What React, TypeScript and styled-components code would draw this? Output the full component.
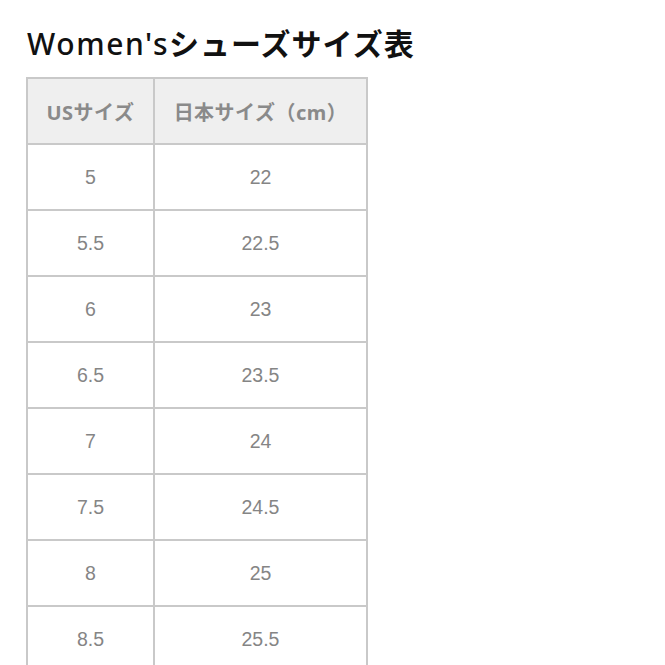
import React from 'react';
import styled, { createGlobalStyle } from 'styled-components';

const GlobalStyle = createGlobalStyle`
  body {
    margin: 0;
    background: #ffffff;
    font-family: "Noto Sans", "Noto Sans CJK JP", sans-serif;
  }
`;

const Page = styled.div`
  padding: 24px 0 0 26px;
`;

const Title = styled.h2`
  margin: 0 0 13px 1px;
  font-size: 30px;
  line-height: 40px;
  font-weight: 700;
  color: #111111;
  letter-spacing: 1px;
`;

const Latin = styled.span`
  font-weight: 500;
  letter-spacing: 1.6px;
`;

const Table = styled.table`
  border-collapse: collapse;
  border: 2px solid #c9c9c9;
`;

const HeadCell = styled.th<{ $width: number }>`
  width: ${(p) => p.$width}px;
  height: 64px;
  padding: 0;
  background: #efefef;
  border: 2px solid #c9c9c9;
  color: #8a8a8a;
  font-size: 20px;
  font-weight: 700;
  text-align: center;
  letter-spacing: 0.5px;
`;

const Cell = styled.td`
  height: 64px;
  padding: 0;
  border: 2px solid #c9c9c9;
  color: #858585;
  font-family: "Liberation Sans", "Noto Sans CJK JP", sans-serif;
  font-size: 19.5px;
  text-align: center;
`;

const sizes: [string, string][] = [
  ['5', '22'],
  ['5.5', '22.5'],
  ['6', '23'],
  ['6.5', '23.5'],
  ['7', '24'],
  ['7.5', '24.5'],
  ['8', '25'],
  ['8.5', '25.5'],
];

const App = () => (
  <Page>
    <GlobalStyle />
    <Title>
      <Latin>Women's</Latin>シューズサイズ表
    </Title>
    <Table>
      <thead>
        <tr>
          <HeadCell $width={125}>USサイズ</HeadCell>
          <HeadCell $width={211}>日本サイズ（cm）</HeadCell>
        </tr>
      </thead>
      <tbody>
        {sizes.map(([us, jp]) => (
          <tr key={us}>
            <Cell>{us}</Cell>
            <Cell>{jp}</Cell>
          </tr>
        ))}
      </tbody>
    </Table>
  </Page>
);

export default App;
